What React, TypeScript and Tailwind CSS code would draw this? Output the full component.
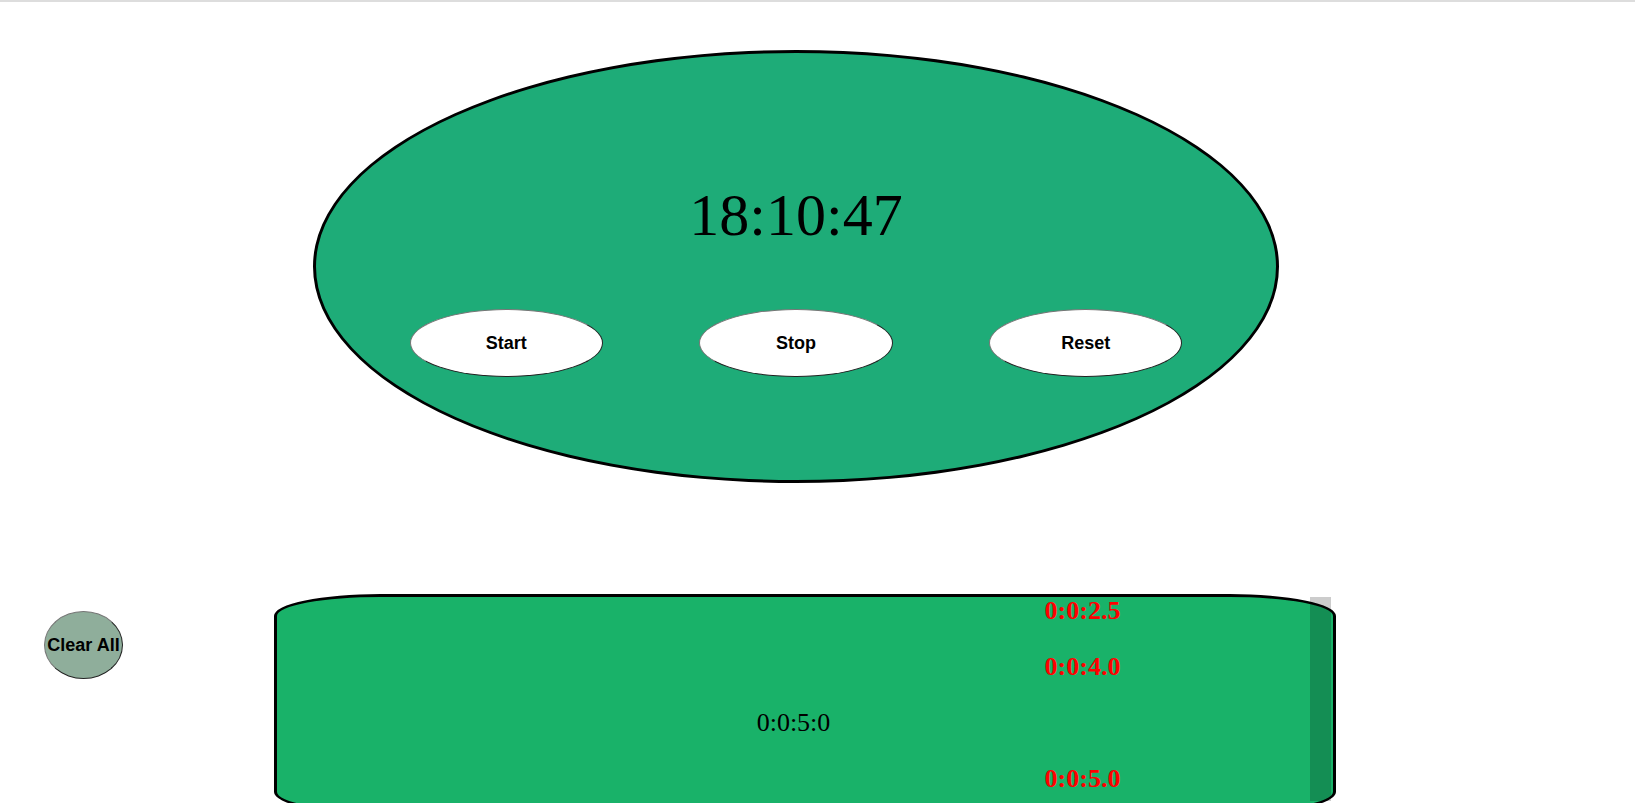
import { useState } from 'react';

type Lap = { time: string; kind: 'split' | 'stop' };

const initialLaps: Lap[] = [
  { time: '0:0:2.5', kind: 'stop' },
  { time: '0:0:4.0', kind: 'stop' },
  { time: '0:0:5:0', kind: 'split' },
  { time: '0:0:5.0', kind: 'stop' },
];

const bevel =
  'h-[68px] rounded-[50%] border border-t-[#767676] border-l-[#767676] border-r-[#222222] border-b-[#222222] font-["Liberation_Sans",Arial,sans-serif] text-[18px] font-bold whitespace-nowrap text-black';

function ClockButton({ label }: { label: string }) {
  return (
    <button type="button" className={`${bevel} w-1/5 bg-white`}>
      {label}
    </button>
  );
}

function Clock() {
  return (
    <section className="col-start-2 h-[433px] rounded-[50%] border-[3px] border-black bg-[#1eac78] pt-32">
      <time className="block text-center text-[60px] leading-[69px]">18:10:47</time>
      <div className="-mx-[3px] mt-[59px] flex justify-evenly">
        <ClockButton label="Start" />
        <ClockButton label="Stop" />
        <ClockButton label="Reset" />
      </div>
    </section>
  );
}

function LapPanel({ laps }: { laps: Lap[] }) {
  return (
    <section className="relative h-[220px] rounded-[10%] border-[3px] border-black bg-[#19b269]">
      <ul className="flex flex-col gap-7 text-[26px] leading-7">
        {laps.map((lap) => (
          <li
            key={lap.time}
            className="grid grid-cols-[372fr_289fr_289fr_106fr] text-center"
          >
            <span
              className={
                lap.kind === 'stop' ? 'col-start-3 font-bold text-[#ff0000]' : 'col-start-2'
              }
            >
              {lap.time}
            </span>
          </li>
        ))}
      </ul>
      <div className="absolute top-0 right-0.5 h-[204px] w-[21px] bg-black/20" />
    </section>
  );
}

export default function App() {
  const [laps, setLaps] = useState(initialLaps);

  return (
    <main className='h-screen overflow-y-auto border-t-2 border-[#dddddd] bg-white font-["Liberation_Serif","Times_New_Roman",serif] text-black [scrollbar-width:none]'>
      <div className="grid grid-cols-[313fr_966fr_356fr] pt-12">
        <Clock />
      </div>
      <div className="mt-[111px] grid grid-cols-[274fr_1062fr_299fr]">
        <div className="pt-[17px] pl-11">
          <button
            type="button"
            onClick={() => setLaps([])}
            className={`${bevel} w-[79px] bg-[#8fae9b]`}
          >
            Clear All
          </button>
        </div>
        <LapPanel laps={laps} />
      </div>
    </main>
  );
}
